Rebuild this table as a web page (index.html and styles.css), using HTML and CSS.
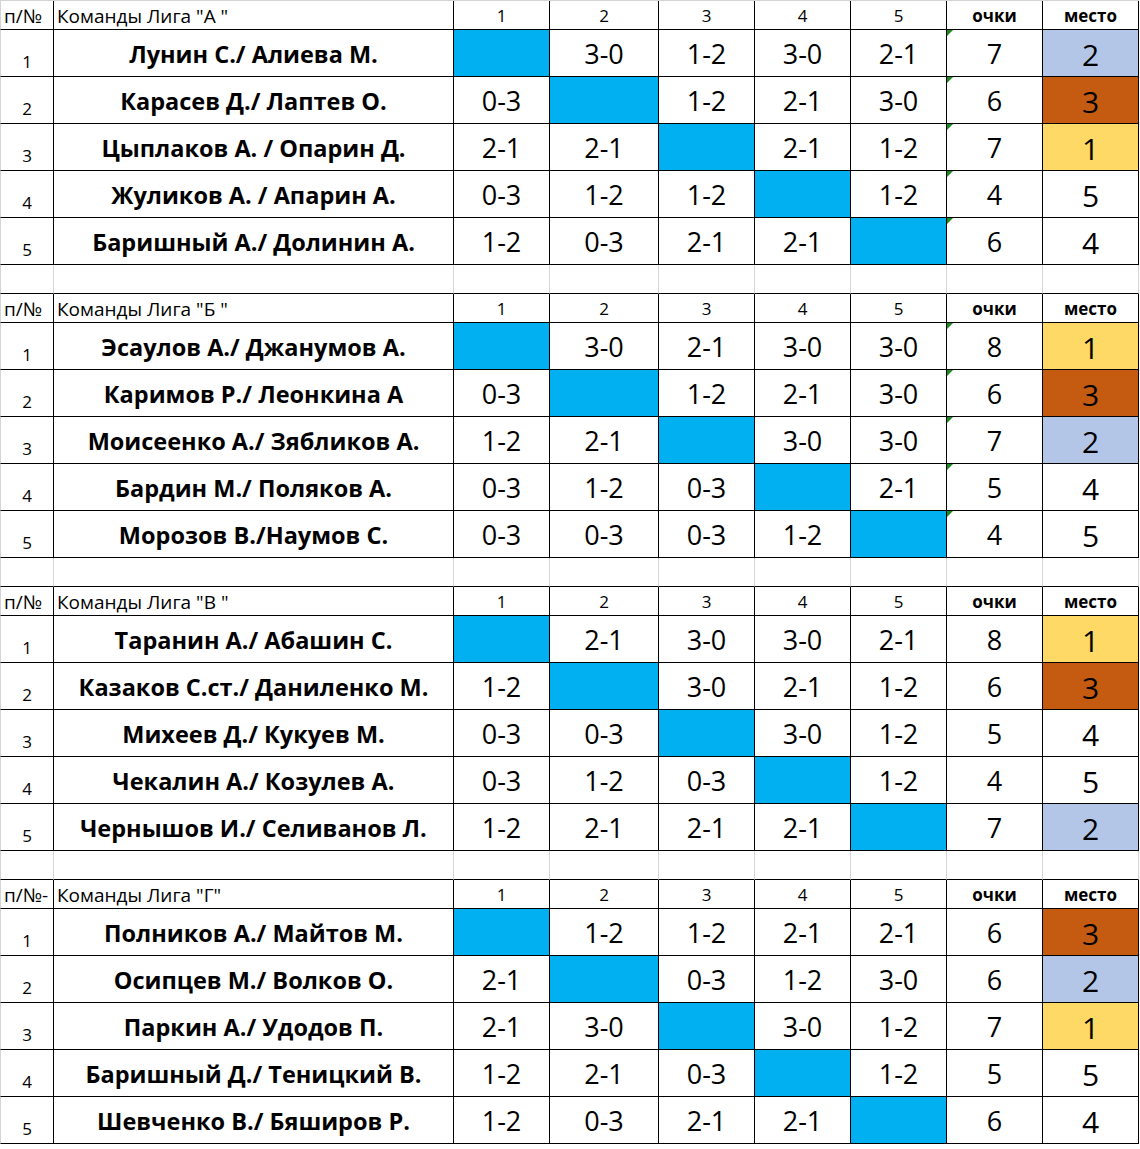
FILE: index.html
```html
<!DOCTYPE html>
<html lang="ru">
<head>
<meta charset="utf-8">
<title>Лиги</title>
<link rel="stylesheet" href="styles.css">
</head>
<body>
<div class="sheet" id="sheet"></div>
<script src="app.js"></script>
</body>
</html>
```

FILE: app.js
```js
const leagues = [
  { title: 'Команды Лига "А "', num: 'п/№', tri: true, rows: [
    ['Лунин С./ Алиева М.', ['x','3-0','1-2','3-0','2-1'], 7, 2],
    ['Карасев Д./ Лаптев О.', ['0-3','x','1-2','2-1','3-0'], 6, 3],
    ['Цыплаков А. / Опарин Д.', ['2-1','2-1','x','2-1','1-2'], 7, 1],
    ['Жуликов А. / Апарин А.', ['0-3','1-2','1-2','x','1-2'], 4, 5],
    ['Баришный А./ Долинин А.', ['1-2','0-3','2-1','2-1','x'], 6, 4]
  ]},
  { title: 'Команды Лига "Б "', num: 'п/№', tri: true, rows: [
    ['Эсаулов А./ Джанумов А.', ['x','3-0','2-1','3-0','3-0'], 8, 1],
    ['Каримов Р./ Леонкина А', ['0-3','x','1-2','2-1','3-0'], 6, 3],
    ['Моисеенко А./ Зябликов А.', ['1-2','2-1','x','3-0','3-0'], 7, 2],
    ['Бардин М./ Поляков А.', ['0-3','1-2','0-3','x','2-1'], 5, 4],
    ['Морозов В./Наумов С.', ['0-3','0-3','0-3','1-2','x'], 4, 5]
  ]},
  { title: 'Команды Лига "В "', num: 'п/№', tri: false, rows: [
    ['Таранин А./ Абашин С.', ['x','2-1','3-0','3-0','2-1'], 8, 1],
    ['Казаков С.ст./ Даниленко М.', ['1-2','x','3-0','2-1','1-2'], 6, 3],
    ['Михеев Д./ Кукуев М.', ['0-3','0-3','x','3-0','1-2'], 5, 4],
    ['Чекалин А./ Козулев А.', ['0-3','1-2','0-3','x','1-2'], 4, 5],
    ['Чернышов И./ Селиванов Л.', ['1-2','2-1','2-1','2-1','x'], 7, 2]
  ]},
  { title: 'Команды Лига "Г"', num: 'п/№-', tri: false, rows: [
    ['Полников А./ Майтов М.', ['x','1-2','1-2','2-1','2-1'], 6, 3],
    ['Осипцев М./ Волков О.', ['2-1','x','0-3','1-2','3-0'], 6, 2],
    ['Паркин А./ Удодов П.', ['2-1','3-0','x','3-0','1-2'], 7, 1],
    ['Баришный Д./ Теницкий В.', ['1-2','2-1','0-3','x','1-2'], 5, 5],
    ['Шевченко В./ Бяширов Р.', ['1-2','0-3','2-1','2-1','x'], 6, 4]
  ]}
];
const placeClass = {1: 'gold', 2: 'silver', 3: 'bronze'};
const sheet = document.getElementById('sheet');
let html = '';
leagues.forEach((lg, li) => {
  if (li > 0) {
    for (let i = 0; i < 9; i++) html += '<div class="c gap"></div>';
  }
  html += '<div class="c hd num"><span>' + lg.num + '</span></div>';
  html += '<div class="c hd title"><span>' + lg.title + '</span></div>';
  for (let i = 1; i <= 5; i++) html += '<div class="c hd col">' + i + '</div>';
  html += '<div class="c hd col b">очки</div><div class="c hd col b">место</div>';
  lg.rows.forEach((r, ri) => {
    html += '<div class="c idx">' + (ri + 1) + '</div>';
    html += '<div class="c name">' + r[0] + '</div>';
    r[1].forEach(s => {
      html += s === 'x' ? '<div class="c sc self"></div>' : '<div class="c sc">' + s + '</div>';
    });
    html += '<div class="c sc pts' + (lg.tri ? ' tri' : '') + '">' + r[2] + '</div>';
    html += '<div class="c place ' + (placeClass[r[3]] || '') + '">' + r[3] + '</div>';
  });
});
sheet.innerHTML = html;
```

FILE: styles.css
```css
html, body {
  margin: 0;
  padding: 0;
  background: #fff;
}
.sheet {
  display: grid;
  grid-template-columns: 54px 400px 96px 109px 96px 96px 96px 96px 96px;
  grid-auto-rows: auto;
  width: 1139px;
  border-top: 1px solid #d4d4d4;
  font-family: "Open Sans", "Noto Sans", sans-serif;
  color: #000;
}
.c {
  box-sizing: border-box;
  border-right: 1px solid #000;
  border-bottom: 1px solid #000;
  height: 47px;
  display: flex;
  align-items: center;
  justify-content: center;
  position: relative;
  overflow: hidden;
  white-space: nowrap;
}
.c:nth-child(9n+1) {
  border-left: 1px solid #d4d4d4;
}
.gap {
  height: 29px;
  border-right-color: #d4d4d4;
}
.hd {
  height: 29px;
  align-items: flex-end;
  font-size: 18px;
  line-height: 22px;
  padding-bottom: 2px;
}
.hd.num {
  justify-content: flex-start;
  padding-left: 3px;
  font-size: 19px;
}
.hd.title {
  justify-content: flex-start;
  padding-left: 3px;
  font-size: 19px;
}
.hd.col {
  font-size: 17px;
}
.hd.b {
  font-weight: 700;
  font-size: 17px;
}
.idx {
  align-items: flex-end;
  font-size: 17px;
  line-height: 20px;
  padding-bottom: 4px;
}
.name {
  font-weight: 700;
  font-size: 23.5px;
  line-height: 1;
  padding-top: 4px;
}
.sc {
  font-size: 27px;
  line-height: 1;
  padding-top: 1px;
}
.self {
  background: #00b0f0;
}
.place {
  font-size: 30px;
  line-height: 1;
  padding-top: 3px;
}
.gold { background: #ffd966; }
.silver { background: #b4c6e7; }
.bronze { background: #c55a11; }
.tri::before {
  content: "";
  position: absolute;
  left: 0;
  top: 0;
  border-top: 6px solid #1a8a1a;
  border-right: 6px solid transparent;
}
```
